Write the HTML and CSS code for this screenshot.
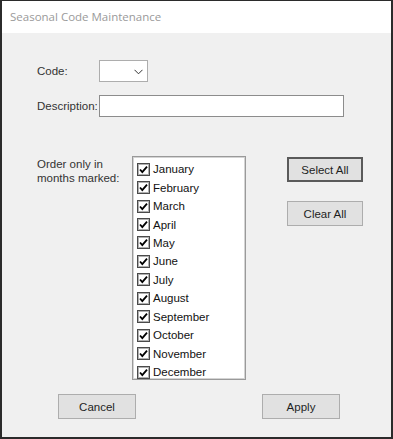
FILE: index.html
```html
<!DOCTYPE html>
<html>
<head>
<meta charset="utf-8">
<link rel="stylesheet" href="styles.css">
</head>
<body>
<div class="window">
  <div class="titlebar">Seasonal Code Maintenance</div>
  <div class="content">
    <div class="row row-code">
      <label class="label">Code:</label>
      <div class="combo"><svg class="chev" width="9" height="6" viewBox="0 0 9 6"><polyline points="0.5,0.8 4.5,4.8 8.5,0.8" fill="none" stroke="#333" stroke-width="1"/></svg></div>
    </div>
    <div class="row row-desc">
      <label class="label">Description:</label>
      <div class="textbox"></div>
    </div>
    <div class="months">
      <div class="months-label">Order only in<br>months marked:</div>
      <div class="listbox">
        <div class="item"><span class="cb"><svg viewBox="0 0 11 11" width="11" height="11"><polyline points="2,5.5 4.3,8.2 9,2.6" fill="none" stroke="#000" stroke-width="1.8"/></svg></span>January</div>
        <div class="item"><span class="cb"><svg viewBox="0 0 11 11" width="11" height="11"><polyline points="2,5.5 4.3,8.2 9,2.6" fill="none" stroke="#000" stroke-width="1.8"/></svg></span>February</div>
        <div class="item"><span class="cb"><svg viewBox="0 0 11 11" width="11" height="11"><polyline points="2,5.5 4.3,8.2 9,2.6" fill="none" stroke="#000" stroke-width="1.8"/></svg></span>March</div>
        <div class="item"><span class="cb"><svg viewBox="0 0 11 11" width="11" height="11"><polyline points="2,5.5 4.3,8.2 9,2.6" fill="none" stroke="#000" stroke-width="1.8"/></svg></span>April</div>
        <div class="item"><span class="cb"><svg viewBox="0 0 11 11" width="11" height="11"><polyline points="2,5.5 4.3,8.2 9,2.6" fill="none" stroke="#000" stroke-width="1.8"/></svg></span>May</div>
        <div class="item"><span class="cb"><svg viewBox="0 0 11 11" width="11" height="11"><polyline points="2,5.5 4.3,8.2 9,2.6" fill="none" stroke="#000" stroke-width="1.8"/></svg></span>June</div>
        <div class="item"><span class="cb"><svg viewBox="0 0 11 11" width="11" height="11"><polyline points="2,5.5 4.3,8.2 9,2.6" fill="none" stroke="#000" stroke-width="1.8"/></svg></span>July</div>
        <div class="item"><span class="cb"><svg viewBox="0 0 11 11" width="11" height="11"><polyline points="2,5.5 4.3,8.2 9,2.6" fill="none" stroke="#000" stroke-width="1.8"/></svg></span>August</div>
        <div class="item"><span class="cb"><svg viewBox="0 0 11 11" width="11" height="11"><polyline points="2,5.5 4.3,8.2 9,2.6" fill="none" stroke="#000" stroke-width="1.8"/></svg></span>September</div>
        <div class="item"><span class="cb"><svg viewBox="0 0 11 11" width="11" height="11"><polyline points="2,5.5 4.3,8.2 9,2.6" fill="none" stroke="#000" stroke-width="1.8"/></svg></span>October</div>
        <div class="item"><span class="cb"><svg viewBox="0 0 11 11" width="11" height="11"><polyline points="2,5.5 4.3,8.2 9,2.6" fill="none" stroke="#000" stroke-width="1.8"/></svg></span>November</div>
        <div class="item"><span class="cb"><svg viewBox="0 0 11 11" width="11" height="11"><polyline points="2,5.5 4.3,8.2 9,2.6" fill="none" stroke="#000" stroke-width="1.8"/></svg></span>December</div>
      </div>
      <div class="side-buttons">
        <button class="btn btn-default">Select All</button>
        <button class="btn">Clear All</button>
      </div>
    </div>
    <div class="footer">
      <button class="btn btn-wide">Cancel</button>
      <button class="btn btn-wide">Apply</button>
    </div>
  </div>
</div>
</body>
</html>
```

FILE: styles.css
```css
* { box-sizing: border-box; }
html, body { margin: 0; padding: 0; background: #f0f0f0; }
body {
  font-family: "Liberation Sans", Arial, sans-serif;
  font-size: 11.5px;
  color: #1e1e1e;
}
.window {
  width: 393px;
  height: 439px;
  border: 2px solid #2b2b2b;
  border-top-width: 1px;
  background: #f0f0f0;
  display: flex;
  flex-direction: column;
  overflow: hidden;
}
.titlebar {
  height: 32px;
  background: #fff;
  color: #9a9a9a;
  font-family: "Open Sans", "Noto Sans", sans-serif;
  font-size: 11.5px;
  padding: 8px 0 0 8px;
  line-height: 16px;
}
.content {
  display: flex;
  flex-direction: column;
  padding: 0 0 0 35px;
}
.row {
  display: flex;
  align-items: center;
  height: 22px;
}
.row-code { margin-top: 27px; }
.row-desc { margin-top: 13px; }
.label {
  width: 62px;
  color: #333;
}
.combo {
  width: 49px;
  height: 22px;
  background: #fff;
  border: 1px solid #adadad;
  display: flex;
  align-items: center;
  justify-content: flex-end;
  padding-right: 4px;
}
.chev { display: block; margin-top: 1px; }
.textbox {
  width: 245px;
  height: 22px;
  background: #fff;
  border: 1px solid #8c8c8c;
}
.months {
  display: flex;
  align-items: flex-start;
  margin-top: 39px;
}
.months-label {
  width: 95px;
  line-height: 14px;
  margin-top: 1px;
  color: #333;
}
.listbox {
  width: 114px;
  height: 224px;
  background: #fff;
  border: 1px solid #9a9a9a;
  box-shadow: inset 0 0 0 1px #d4d4d4;
  padding: 3px 0 0 4px;
  overflow: hidden;
}
.item {
  display: flex;
  align-items: center;
  height: 18.45px;
  white-space: nowrap;
  color: #111;
}
.cb {
  width: 13px;
  height: 13px;
  border: 1px solid #4a4a4a;
  box-shadow: inset 0 0 0 1px #b0b0b0;
  background: #fff;
  margin-right: 3px;
  display: flex;
  align-items: center;
  justify-content: center;
  flex: none;
}
.cb svg { display: block; }
.side-buttons {
  display: flex;
  flex-direction: column;
  gap: 19px;
  margin-left: 41px;
  margin-top: 1px;
}
.btn {
  width: 76px;
  height: 25px;
  background: #e1e1e1;
  border: 1px solid #adadad;
  font-family: "Liberation Sans", Arial, sans-serif;
  font-size: 11.5px;
  color: #1e1e1e;
  padding: 0;
  margin: 0;
}
.btn-default {
  border: 2px solid #5a5a5a;
}
.btn-wide { width: 78px; }
.footer {
  display: flex;
  gap: 126px;
  margin-top: 14px;
  padding-left: 21px;
}
```
